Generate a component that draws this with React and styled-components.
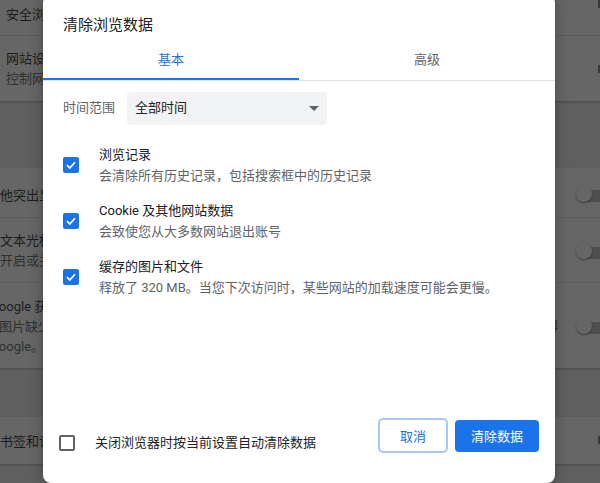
import React from "react";
import styled, { createGlobalStyle } from "styled-components";

const Global = createGlobalStyle`
  html, body { margin: 0; padding: 0; width: 600px; height: 483px; overflow: hidden; background: #5f5f5f; }
  body { font-family: Roboto, "Noto Sans CJK SC", sans-serif; }
  * { box-sizing: border-box; }
`;

const Page = styled.div`
  position: relative;
  width: 600px;
  height: 483px;
  overflow: hidden;
  background: #5f5f5f;
  color: #1f1f1f;
`;
const Card = styled.section`
  height: ${(p) => p.$h}px;
  margin-top: ${(p) => p.$gap}px;
  background: #666;
  box-shadow: 0 1px 2px rgba(0, 0, 0, 0.22);
`;
const SetRow = styled.div`
  height: ${(p) => p.$h}px;
  padding-top: ${(p) => p.$pt}px;
  border-bottom: ${(p) => (p.$line ? "1px solid #5d5d5d" : "none")};
  display: flex;
  justify-content: space-between;
  align-items: flex-start;
  font-size: 13px;
  line-height: 20px;
  white-space: nowrap;
`;
const SetText = styled.div`
  margin-left: ${(p) => p.$indent}px;
`;
const SetLabel = styled.div`
  color: #1c1c1c;
`;
const SetSub = styled.div`
  color: #303030;
  margin-left: ${(p) => p.$shift || 0}px;
`;
const Toggle = styled.div`
  position: relative;
  flex: none;
  width: 24px;
  height: 12px;
  margin-top: ${(p) => p.$mt}px;
  margin-right: -8px;
  background: #4e4e4e;
  &::before {
    content: "";
    position: absolute;
    left: -8px;
    top: -4px;
    width: 16px;
    height: 16px;
    border-radius: 50%;
    background: #666;
    box-shadow: 0 1px 2px rgba(0, 0, 0, 0.4);
  }
`;
const Chevron = styled.span`
  flex: none;
  width: 6px;
  height: 8px;
  margin-top: ${(p) => p.$mt}px;
  margin-right: -4px;
  background: #383838;
`;
const Dialog = styled.div`
  position: absolute;
  left: 43px;
  top: -5px;
  width: 512px;
  height: 488px;
  background: #fff;
  border-radius: 8px;
  box-shadow: 0 0 14px rgba(0, 0, 0, 0.3);
  display: flex;
  flex-direction: column;
`;
const Title = styled.h1`
  margin: 0;
  padding: 20px 20px 0;
  height: 49px;
  font-size: 15px;
  font-weight: 400;
  line-height: 20px;
  color: #202124;
`;
const Tabs = styled.div`
  display: flex;
  height: 37px;
  border-bottom: 1px solid #dfe1e5;
`;
const Tab = styled.div`
  width: 256px;
  height: 36px;
  display: flex;
  align-items: center;
  justify-content: center;
  padding-bottom: 5px;
  font-size: 13px;
  color: ${(p) => (p.$active ? "#1a73e8" : "#5f6368")};
  border-bottom: 2px solid ${(p) => (p.$active ? "#1a73e8" : "transparent")};
`;
const Range = styled.div`
  display: flex;
  align-items: center;
  gap: 12px;
  margin: 11px 0 0 20px;
  font-size: 13px;
  line-height: 18px;
  color: #5f6368;
`;
const RangeLabel = styled.span`
  padding-bottom: 1px;
`;
const Select = styled.div`
  width: 200px;
  height: 33px;
  padding: 0 8px 1px;
  border-radius: 4px;
  background: #f1f3f4;
  color: #202124;
  display: flex;
  align-items: center;
  justify-content: space-between;
`;
const Arrow = styled.span`
  width: 0;
  height: 0;
  margin-top: 1px;
  border-left: 5px solid transparent;
  border-right: 5px solid transparent;
  border-top: 5px solid #5f6368;
`;
const Options = styled.div`
  margin: 20px 0 0 20px;
  display: flex;
  flex-direction: column;
  gap: 16px;
`;
const Option = styled.div`
  display: flex;
  align-items: center;
  gap: 20px;
  height: 40px;
`;
const Box = styled.span`
  flex: none;
  width: 16px;
  height: 16px;
  border-radius: 2px;
  display: flex;
  align-items: center;
  justify-content: center;
  background: ${(p) => (p.$on ? "#1a73e8" : "#fff")};
  border: ${(p) => (p.$on ? "none" : "2px solid #5f6368")};
`;
const OptionText = styled.div`
  font-size: 13px;
  line-height: 20px;
  white-space: nowrap;
`;
const OptionTitle = styled.div`
  color: #202124;
`;
const OptionSub = styled.div`
  color: #5f6368;
  padding-top: 1px;
  margin-bottom: -1px;
`;
const Footer = styled.div`
  margin-top: auto;
  height: 35px;
  margin-bottom: 30px;
  padding: 0 16px;
  display: flex;
  align-items: center;
  font-size: 13px;
  color: #202124;
`;
const Keep = styled.div`
  display: flex;
  align-items: center;
  gap: 20px;
  flex: 1;
  padding-top: 15px;
  line-height: 16px;
`;
const Ghost = styled.button`
  width: 70px;
  height: 35px;
  margin-right: 7px;
  padding: 0;
  font: inherit;
  background: #fff;
  color: #1a73e8;
  border: 2px solid #a8c7f5;
  border-radius: 5px;
`;
const Primary = styled.button`
  width: 84px;
  height: 32px;
  padding: 0;
  font: inherit;
  background: #1a73e8;
  color: #fff;
  border: none;
  border-radius: 4px;
`;

const Check = () => (
  <svg width="12" height="12" viewBox="0 0 12 12" fill="none">
    <path d="M2 6.2 L4.8 9 L10 3.2" stroke="#fff" strokeWidth="1.7" />
  </svg>
);

export default function App() {
  return (
    <Page>
      <Global />
      <Card $h={101} $gap={0}>
        <SetRow $h={36} $pt={5} $line>
          <SetText $indent={6}><SetLabel>安全浏览</SetLabel></SetText>
          <Chevron $mt={-5} />
        </SetRow>
        <SetRow $h={65} $pt={13}>
          <SetText $indent={6}><SetLabel>网站设置</SetLabel><SetSub>控制网站可以使用的信息</SetSub></SetText>
          <Chevron $mt={16} />
        </SetRow>
      </Card>
      <Card $h={200} $gap={67}>
        <SetRow $h={50} $pt={18} $line>
          <SetText $indent={-13}><SetLabel>其他突出显示</SetLabel></SetText>
          <Toggle $mt={4} />
        </SetRow>
        <SetRow $h={65} $pt={13} $line>
          <SetText $indent={-13}><SetLabel>以文本光标</SetLabel><SetSub>可开启或关闭</SetSub></SetText>
          <Toggle $mt={16} />
        </SetRow>
        <SetRow $h={85} $pt={14}>
          <SetText $indent={-10}>
            <SetLabel>Google 获取</SetLabel>
            <SetSub $shift={-4}>若图片缺少说明，系统会将其发送至服务器以获取文字描述，然后再由屏幕阅读器朗读给有视力障碍</SetSub>
            <SetSub>Google。</SetSub>
          </SetText>
          <Toggle $mt={25} />
        </SetRow>
      </Card>
      <Card $h={47} $gap={49}>
        <SetRow $h={47} $pt={15}>
          <SetText $indent={-13}><SetLabel>将书签和设置</SetLabel></SetText>
          <Chevron $mt={4} />
        </SetRow>
      </Card>
      <Dialog>
        <Title>清除浏览数据</Title>
        <Tabs>
          <Tab $active>基本</Tab>
          <Tab>高级</Tab>
        </Tabs>
        <Range>
          <RangeLabel>时间范围</RangeLabel>
          <Select>全部时间<Arrow /></Select>
        </Range>
        <Options>
          <Option>
            <Box $on><Check /></Box>
            <OptionText>
              <OptionTitle>浏览记录</OptionTitle>
              <OptionSub>会清除所有历史记录，包括搜索框中的历史记录</OptionSub>
            </OptionText>
          </Option>
          <Option>
            <Box $on><Check /></Box>
            <OptionText>
              <OptionTitle>Cookie 及其他网站数据</OptionTitle>
              <OptionSub>会致使您从大多数网站退出账号</OptionSub>
            </OptionText>
          </Option>
          <Option>
            <Box $on><Check /></Box>
            <OptionText>
              <OptionTitle>缓存的图片和文件</OptionTitle>
              <OptionSub>释放了 320 MB。当您下次访问时，某些网站的加载速度可能会更慢。</OptionSub>
            </OptionText>
          </Option>
        </Options>
        <Footer>
          <Keep><Box /><span>关闭浏览器时按当前设置自动清除数据</span></Keep>
          <Ghost>取消</Ghost>
          <Primary>清除数据</Primary>
        </Footer>
      </Dialog>
    </Page>
  );
}
